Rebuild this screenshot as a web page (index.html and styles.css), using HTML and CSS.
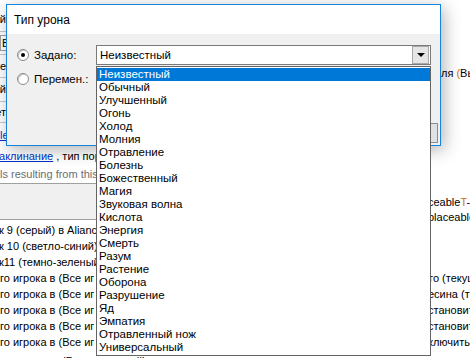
FILE: index.html
```html
<!DOCTYPE html>
<html lang="ru">
<head>
    <meta charset="UTF-8">
    <meta name="viewport" content="width=device-width, initial-scale=1.0">
    <title>Тип урона</title>
    <link rel="stylesheet" href="styles.css">
</head>
<body>
<div class="screen">

    <!-- окно редактора за диалогом -->
    <div class="backdrop">
        <div class="sec-top">
            <div class="props">
                <div class="prop prop-tall"><span class="clip">Случайный</span></div>
                <div class="prop"><span class="field">Воин</span></div>
                <div class="prop"><span class="clip">Среднее</span></div>
                <div class="prop prop-tall"><span class="clip">Обычный</span></div>
                <div class="prop prop-short"><span class="clip">Нет</span></div>
                <div class="prop prop-link"><a class="link">le</a></div>
            </div>
            <div class="note">ля <span class="accent">(</span>Вы</div>
        </div>

        <div class="sec-link">
            <div class="line-a"><a class="link cut">заклинание</a> , тип пор</div>
            <div class="line-b">ls resulting from this</div>
        </div>

        <div class="sec-band">
            <div class="band"></div>
            <div class="band-note">
                <div>ceable<span class="accent">T</span>-</div>
                <div>placeable</div>
            </div>
        </div>

        <div class="rows">
            <div class="row"><span class="l cut1">к 9 (серый) в Alianc</span><span class="r"></span></div>
            <div class="row"><span class="l cut1">к 10 (светло-синий)</span><span class="r"></span></div>
            <div class="row"><span class="l cut1">к11 (темно-зеленый</span><span class="r"></span></div>
            <div class="row"><span class="l">го игрока в (Все иг</span><span class="r">то (текущ</span></div>
            <div class="row"><span class="l">го игрока в (Все иг</span><span class="r">есина (т</span></div>
            <div class="row"><span class="l">го игрока в (Все иг</span><span class="r">становит</span></div>
            <div class="row"><span class="l">го игрока в (Все иг</span><span class="r">становит</span></div>
            <div class="row"><span class="l">го игрока в (Все иг</span><span class="r">ключить</span></div>
            <div class="row row-last">(Без изменений)</div>
        </div>
    </div>

    <!-- диалог -->
    <div class="dialog">
        <div class="dialog-title">Тип урона</div>
        <div class="dialog-body">
            <div class="opt-row">
                <span class="radio checked"></span>
                <span class="opt-label">Задано:</span>
                <div class="combo">
                    <span class="combo-value">Неизвестный</span>
                    <span class="combo-btn"><span class="arrow"></span></span>
                    <ul class="drop-list">
                        <li class="selected">Неизвестный</li>
                        <li>Обычный</li>
                        <li>Улучшенный</li>
                        <li>Огонь</li>
                        <li>Холод</li>
                        <li>Молния</li>
                        <li>Отравление</li>
                        <li>Болезнь</li>
                        <li>Божественный</li>
                        <li>Магия</li>
                        <li>Звуковая волна</li>
                        <li>Кислота</li>
                        <li>Энергия</li>
                        <li>Смерть</li>
                        <li>Разум</li>
                        <li>Растение</li>
                        <li>Оборона</li>
                        <li>Разрушение</li>
                        <li>Яд</li>
                        <li>Эмпатия</li>
                        <li>Отравленный нож</li>
                        <li>Универсальный</li>
                    </ul>
                </div>
            </div>
            <div class="opt-row">
                <span class="radio"></span>
                <span class="opt-label">Перемен.:</span>
            </div>
            <div class="btn-row">
                <button class="btn">OK</button>
                <button class="btn">Отмена</button>
            </div>
        </div>
    </div>

</div>
</body>
</html>
```

FILE: styles.css
```css
* {
    box-sizing: border-box;
}

body {
    margin: 0;
    font-family: 'Liberation Sans', Arial, sans-serif;
    font-size: 11px;
    color: #000;
    background-color: #fff;
}

.screen {
    position: relative;
    width: 470px;
    height: 358px;
    overflow: hidden;
    background-color: #fff;
}

/* ---------- фон ---------- */

.backdrop {
    display: flex;
    flex-direction: column;
}

.sec-top {
    display: flex;
    height: 146px;
}

.props {
    width: 96px;
    padding-top: 8px;
    display: flex;
    flex-direction: column;
}

.prop {
    height: 24px;
    border-bottom: 1px solid #c8c8c8;
    display: flex;
    align-items: center;
}

.prop-tall {
    height: 25px;
}

.prop-short {
    height: 22px;
}

.prop-link {
    border-bottom: none;
}

.clip {
    width: 6px;
    display: flex;
    justify-content: flex-end;
    overflow: hidden;
    white-space: nowrap;
}

.field {
    width: 90px;
    height: 16px;
    line-height: 14px;
    border: 1px solid #a0a0a0;
    padding-left: 1px;
}

.link {
    color: #0033cc;
    text-decoration: underline;
}

.accent {
    color: #d07000;
}

.note {
    margin-left: auto;
    width: 29px;
    padding-top: 66px;
    line-height: 15px;
    white-space: nowrap;
    overflow: hidden;
}

.sec-link {
    height: 37px;
    width: 96px;
    overflow: hidden;
}

.line-a {
    height: 20px;
    line-height: 21px;
    white-space: nowrap;
}

.line-b {
    height: 17px;
    line-height: 17px;
    color: #6d6d6d;
    white-space: nowrap;
}

.cut {
    margin-left: -6px;
}

.sec-band {
    display: flex;
    height: 37px;
}

.band {
    width: 380px;
    background-color: #f0f0f0;
    border-top: 1px solid #a0a0a0;
    border-bottom: 1px solid #a0a0a0;
}

.band-note {
    margin-left: auto;
    width: 42px;
    padding-top: 12px;
    line-height: 15px;
    white-space: nowrap;
    overflow: hidden;
    height: 42px;
    margin-bottom: -5px;
}

.rows {
    padding-top: 2px;
}

.row {
    display: flex;
    height: 16px;
    line-height: 16px;
    white-space: nowrap;
}

.row .l {
    width: 96px;
    overflow: hidden;
}

.row .cut1 {
    text-indent: -1px;
}

.row .r {
    margin-left: auto;
    width: 42px;
    overflow: hidden;
}

.row-last {
    margin-top: 3px;
    padding-left: 62px;
}

/* ---------- диалог ---------- */

.dialog {
    position: absolute;
    left: 6px;
    top: 4px;
    width: 435px;
    height: 142px;
    border: 1px solid #1883d7;
    background-color: #f0f0f0;
    box-shadow: 3px 4px 16px rgba(0, 0, 0, 0.3);
    display: flex;
    flex-direction: column;
    font-size: 11.5px;
    z-index: 1;
}

.dialog-title {
    height: 29px;
    background-color: #fff;
    padding-left: 7px;
    display: flex;
    align-items: center;
    font-size: 12px;
}

.dialog-body {
    flex: 1;
    padding: 11px 2px 2px 10px;
    display: flex;
    flex-direction: column;
}

.opt-row {
    display: flex;
    align-items: center;
    height: 20px;
}

.opt-row + .opt-row {
    margin-top: 4px;
}

.radio {
    position: relative;
    width: 12px;
    height: 12px;
    border-radius: 50%;
    border: 1px solid #8a8a8a;
    background-color: #fff;
    box-shadow: inset 1px 1px 0 #c8c8c8;
}

.radio.checked::after {
    content: '';
    position: absolute;
    left: 3px;
    top: 3px;
    width: 4px;
    height: 4px;
    border-radius: 50%;
    background-color: #000;
}

.opt-label {
    width: 62px;
    margin-left: 5px;
}

.combo {
    position: relative;
    flex: 1;
    height: 20px;
    margin-right: 7px;
    border: 1px solid #7a7a7a;
    background-color: #fff;
    display: flex;
    align-items: stretch;
    padding: 0 1px 0 3px;
}

.combo-value {
    flex: 1;
    line-height: 18px;
}

.combo-btn {
    width: 17px;
    background-color: #e5e5e5;
    border: 1px solid #a8a8a8;
    display: flex;
    align-items: center;
    justify-content: center;
}

.arrow {
    width: 0;
    height: 0;
    border-left: 4px solid transparent;
    border-right: 4px solid transparent;
    border-top: 4px solid #000;
}

.drop-list {
    position: absolute;
    left: -1px;
    top: 20px;
    width: calc(100% + 2px);
    height: 290px;
    margin: 0;
    padding: 1px 0;
    list-style: none;
    background-color: #fff;
    border: 1px solid #646464;
    z-index: 2;
}

.drop-list li {
    height: 13px;
    line-height: 13px;
    padding-left: 2px;
    white-space: nowrap;
}

.drop-list li.selected {
    background-color: #0078d7;
    color: #fff;
}

.btn-row {
    margin-top: auto;
    display: flex;
    justify-content: flex-end;
    gap: 6px;
}

.btn {
    width: 75px;
    height: 20px;
    padding: 0;
    font-family: inherit;
    font-size: 11.5px;
    background-color: #e1e1e1;
    border: 1px solid #8c8c8c;
}
```
